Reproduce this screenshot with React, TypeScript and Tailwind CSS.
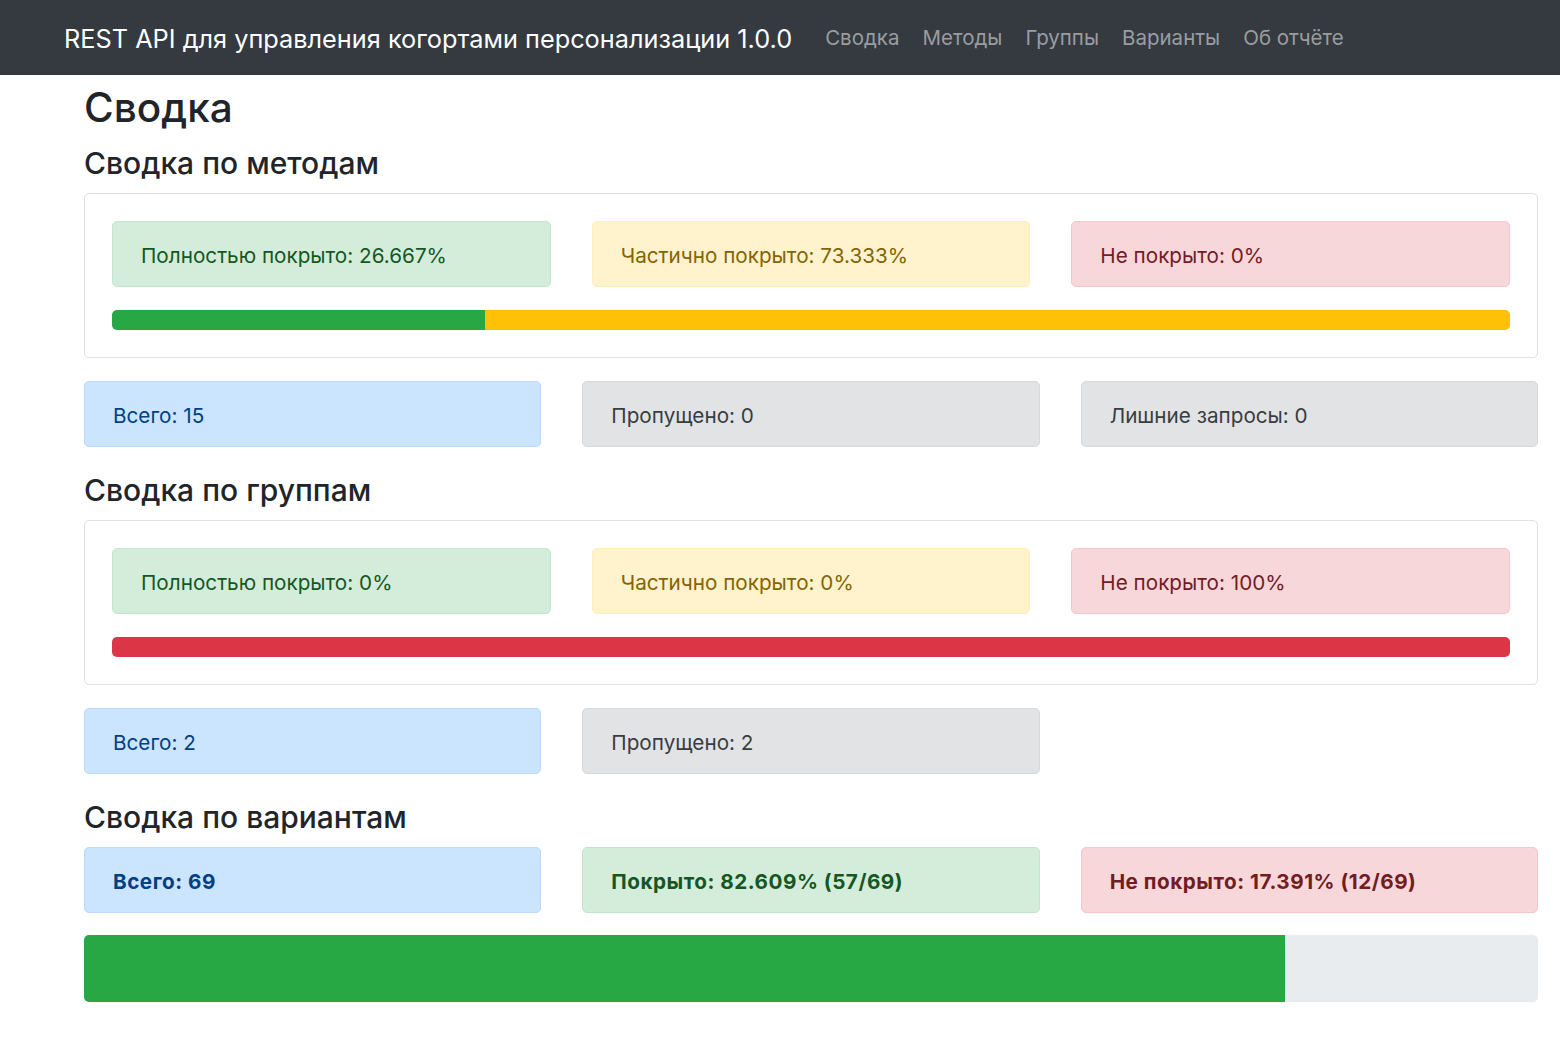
const font = "font-['Inter','Noto_Sans',sans-serif]";

type Tone = 'success' | 'warning' | 'danger' | 'primary' | 'secondary';

const toneClass: Record<Tone, string> = {
  success: 'bg-[#d4edda] border-[#c3e6cb] text-[#155724]',
  warning: 'bg-[#fff3cd] border-[#ffeeba] text-[#856404]',
  danger: 'bg-[#f8d7da] border-[#f5c6cb] text-[#721c24]',
  primary: 'bg-[#cce5ff] border-[#b8daff] text-[#004085]',
  secondary: 'bg-[#e2e3e5] border-[#d6d8db] text-[#383d41]',
};

function Alert({ tone, children, bold }: { tone: Tone; children?: React.ReactNode; bold?: boolean }) {
  return (
    <div
      className={`flex h-[66px] items-center rounded-[5px] border px-[28px] pt-[3px] text-[20.7px] ${bold ? 'font-bold tracking-[0.5px]' : ''} ${toneClass[tone]}`}
    >
      {children}
    </div>
  );
}

function CoverageCard({ full, partial, none }: { full: number; partial: number; none: number }) {
  return (
    <div className="rounded-[5px] border border-[#dfdfdf] p-[27px]">
      <div className="grid grid-cols-3 gap-[41px]">
        <Alert tone="success">Полностью покрыто: {full}%</Alert>
        <Alert tone="warning">Частично покрыто: {partial}%</Alert>
        <Alert tone="danger">Не покрыто: {none}%</Alert>
      </div>
      <div className="mt-[23px] flex h-[20px] overflow-hidden rounded-[5px] bg-[#e9ecef]">
        <div className="bg-[#28a745]" style={{ width: `${full}%` }} />
        <div className="bg-[#ffc107]" style={{ width: `${partial}%` }} />
        <div className="bg-[#dc3545]" style={{ width: `${none}%` }} />
      </div>
    </div>
  );
}

export default function App() {
  return (
    <div className={`min-h-[1038px] bg-white text-[#212529] ${font}`}>
      <nav className="flex h-[75px] items-center bg-[#343a40] pl-[64px] pt-[2px]">
        <span className="text-[25.3px] text-white">REST API для управления когортами персонализации 1.0.0</span>
        <ul className="ml-[33px] flex gap-[23px] text-[20.5px] text-[#9a9da0]">
          <li>Сводка</li>
          <li>Методы</li>
          <li>Группы</li>
          <li>Варианты</li>
          <li>Об отчёте</li>
        </ul>
      </nav>

      <main className="pl-[84px] pr-[22px]">
        <h1 className="mt-[9px] text-[40.5px] font-medium leading-[48px]">Сводка</h1>

        <h2 className="mt-[13px] mb-[12px] text-[30px] font-medium leading-[36px]">Сводка по методам</h2>
        <CoverageCard full={26.667} partial={73.333} none={0} />
        <div className="mt-[23px] grid grid-cols-3 gap-[41px]">
          <Alert tone="primary">Всего: 15</Alert>
          <Alert tone="secondary">Пропущено: 0</Alert>
          <Alert tone="secondary">Лишние запросы: 0</Alert>
        </div>

        <h2 className="mt-[25px] mb-[12px] text-[30px] font-medium leading-[36px]">Сводка по группам</h2>
        <CoverageCard full={0} partial={0} none={100} />
        <div className="mt-[23px] grid grid-cols-3 gap-[41px]">
          <Alert tone="primary">Всего: 2</Alert>
          <Alert tone="secondary">Пропущено: 2</Alert>
        </div>

        <h2 className="mt-[25px] mb-[12px] text-[30px] font-medium leading-[36px]">Сводка по вариантам</h2>
        <div className="grid grid-cols-3 gap-[41px]">
          <Alert tone="primary" bold>Всего: 69</Alert>
          <Alert tone="success" bold>Покрыто: 82.609% (57/69)</Alert>
          <Alert tone="danger" bold>Не покрыто: 17.391% (12/69)</Alert>
        </div>
        <div className="mt-[22px] flex h-[67px] overflow-hidden rounded-[5px] bg-[#e9ecef]">
          <div className="bg-[#28a745]" style={{ width: '82.609%' }} />
        </div>
      </main>
    </div>
  );
}
